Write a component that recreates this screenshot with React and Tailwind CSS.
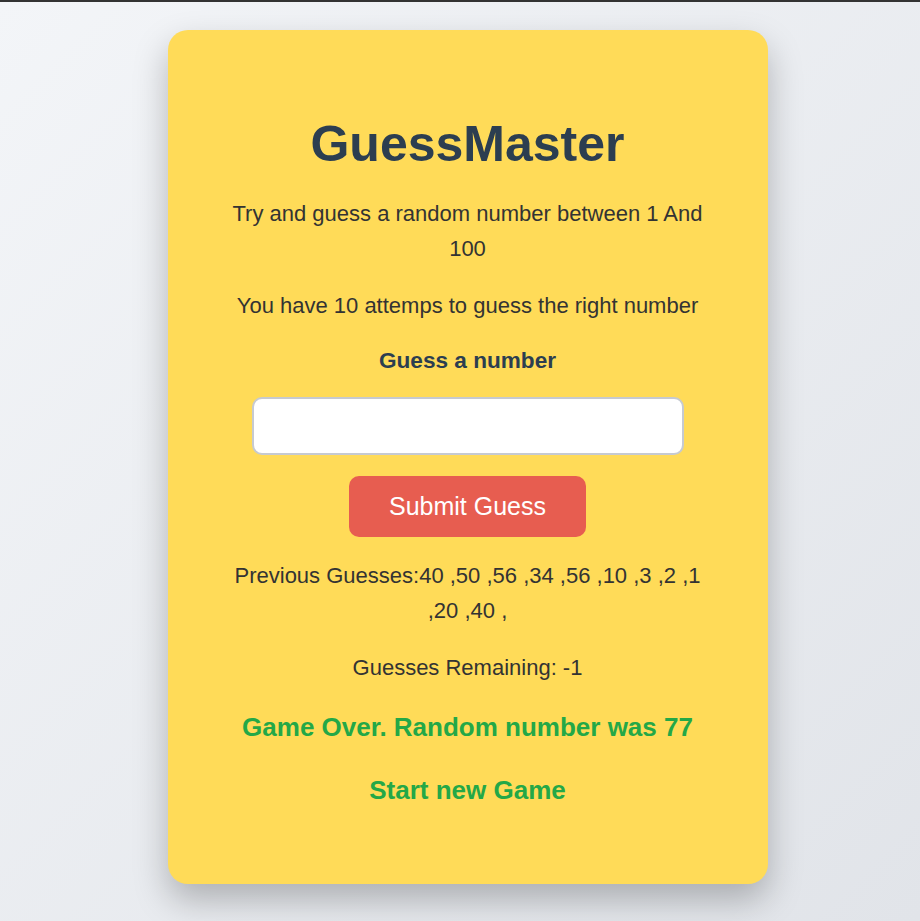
export default function App() {
  const guesses = [40, 50, 56, 34, 56, 10, 3, 2, 1, 20, 40];

  return (
    <div className="min-h-[921px] bg-gradient-to-br from-[#f3f5f8] to-[#e1e4e9] font-['Liberation_Sans',Arial,sans-serif] text-[#333]">
      <div className="h-[2px] bg-[#333]" />
      <div className="flex justify-center pt-[28px] pb-[36px] pl-[15px]">
        <div className="flex w-[600px] flex-col items-center rounded-[20px] bg-[#ffdb58] px-[55px] pt-[48px] pb-[48px] text-center shadow-[0_16px_34px_rgba(0,0,0,0.25)]">
          <h1 className="mt-[36px] text-[50px] font-bold leading-[60px] text-[#2c3e50]">GuessMaster</h1>
          <p className="mt-[22px] text-[22px] leading-[35.2px]">Try and guess a random number between 1 And 100</p>
          <p className="mt-[22px] text-[22px] leading-[35.2px]">You have 10 attemps to guess the right number</p>
          <label htmlFor="guess" className="mt-[19px] text-[22.6px] font-bold leading-[35.2px] text-[#2c3e50]">
            Guess a number
          </label>
          <input
            id="guess"
            type="text"
            className="mt-[19px] h-[58px] w-[432px] rounded-[10px] border-2 border-[#c6cad1] bg-white px-3 text-[22px] outline-none"
          />
          <button className="mt-[21px] h-[61px] w-[237px] rounded-[10px] bg-[#e75d50] text-[25px] text-white">
            Submit Guess
          </button>
          <p className="mt-[21px] text-[22px] leading-[35.2px]">
            Previous Guesses:{guesses.map((g) => `${g} ,`).join('')}
          </p>
          <p className="mt-[22px] text-[22px] leading-[35.2px]">Guesses Remaining: -1</p>
          <p className="mt-[22px] text-[26px] font-bold leading-[41px] text-[#24a847]">Game Over. Random number was 77</p>
          <p className="mt-[22px] mb-[25px] text-[26px] font-bold leading-[41px] text-[#24a847]">Start new Game</p>
        </div>
      </div>
    </div>
  );
}
